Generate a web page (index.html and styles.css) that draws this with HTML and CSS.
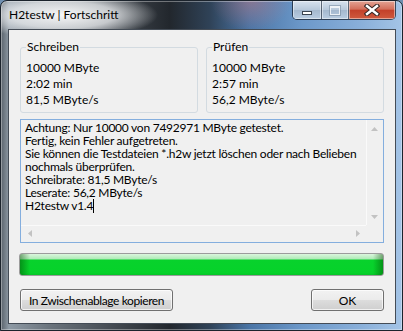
FILE: index.html
```html
<!DOCTYPE html>
<html lang="de">
<head>
    <meta charset="UTF-8">
    <meta name="viewport" content="width=device-width, initial-scale=1.0">
    <title>H2testw | Fortschritt</title>
    <link rel="stylesheet" href="styles.css">
</head>
<body>
    <div class="window">
        <div class="titlebar">
            <span class="title">H2testw | Fortschritt</span>
            <div class="caption-buttons">
                <div class="cb cb-min"><span class="min-icon"></span></div>
                <div class="cb cb-max"><span class="max-icon"></span></div>
                <div class="cb cb-close">
                    <svg width="16" height="12" viewBox="0 0 16 12">
                        <path d="M3 2 L13 10 M13 2 L3 10" stroke="#3a2a28" stroke-width="4.6" stroke-linecap="square" fill="none"/>
                        <path d="M3 2 L13 10 M13 2 L3 10" stroke="#ffffff" stroke-width="2.4" stroke-linecap="square" fill="none"/>
                    </svg>
                </div>
            </div>
        </div>
        <div class="client">
            <div class="groups">
                <fieldset class="group">
                    <legend>Schreiben</legend>
                    <div class="value">10000 MByte</div>
                    <div class="value">2:02 min</div>
                    <div class="value">81,5 MByte/s</div>
                </fieldset>
                <fieldset class="group">
                    <legend>Prüfen</legend>
                    <div class="value">10000 MByte</div>
                    <div class="value">2:57 min</div>
                    <div class="value">56,2 MByte/s</div>
                </fieldset>
            </div>
            <div class="log">
                <div class="log-text">
                    <div class="line">Achtung: Nur 10000 von 7492971 MByte getestet.</div>
                    <div class="line">Fertig, kein Fehler aufgetreten.</div>
                    <div class="line">Sie können die Testdateien *.h2w jetzt löschen oder nach Belieben</div>
                    <div class="line">nochmals überprüfen.</div>
                    <div class="line">Schreibrate: 81,5 MByte/s</div>
                    <div class="line">Leserate: 56,2 MByte/s</div>
                    <div class="line">H2testw v1.4<span class="caret"></span></div>
                </div>
                <div class="vscroll">
                    <div class="arrow-box">
                        <svg width="7" height="4" viewBox="0 0 7 4"><path d="M0 4 L3.5 0 L7 4 Z" fill="#c2c2c2"/></svg>
                    </div>
                    <div class="arrow-box">
                        <svg width="7" height="4" viewBox="0 0 7 4"><path d="M0 0 L3.5 4 L7 0 Z" fill="#c2c2c2"/></svg>
                    </div>
                </div>
                <div class="hscroll">
                    <div class="arrow-box">
                        <svg width="4" height="7" viewBox="0 0 4 7"><path d="M4 0 L0 3.5 L4 7 Z" fill="#c2c2c2"/></svg>
                    </div>
                    <div class="arrow-box">
                        <svg width="4" height="7" viewBox="0 0 4 7"><path d="M0 0 L4 3.5 L0 7 Z" fill="#c2c2c2"/></svg>
                    </div>
                </div>
                <div class="corner"></div>
            </div>
            <div class="progress"></div>
            <div class="buttons">
                <button class="button copy">In Zwischenablage kopieren</button>
                <button class="button ok">OK</button>
            </div>
        </div>
    </div>
</body>
</html>
```

FILE: styles.css
```css
body {
    margin: 0;
    font-family: Lato, "Liberation Sans", sans-serif;
    font-size: 12px;
    color: #000;
    background: #6f8fb0;
}
.window {
    width: 403px;
    height: 331px;
    box-sizing: border-box;
    border: 1px solid #1b232c;
    border-radius: 7px 7px 0 0;
    padding: 0 6px 6px 7px;
    display: flex;
    flex-direction: column;
    box-shadow: inset 0 0 0 1px rgba(255, 255, 255, 0.35);
    background:
        radial-gradient(ellipse 95px 24px at 62px 14px, rgba(255, 255, 255, 0.95), rgba(240, 242, 244, 0.75) 55%, rgba(255, 255, 255, 0) 100%),
        radial-gradient(ellipse 40px 30px at 250px 0px, rgba(190, 120, 130, 0.5), rgba(190, 120, 130, 0) 100%),
        linear-gradient(to right, #5a636c 0%, #8e9aa5 2%, #6b747d 12%, #3f454c 30%, #22272d 42%, #2f4257 52%, #4a75a6 62%, #6c98c9 75%, #8ab0da 90%, #a4c4e6 100%);
}
.titlebar {
    height: 28px;
    display: flex;
    align-items: center;
}
.title {
    padding-left: 1px;
    padding-bottom: 1px;
}
.caption-buttons {
    margin-left: auto;
    align-self: flex-start;
    display: flex;
    height: 19px;
    border: 1px solid rgba(20, 30, 45, 0.75);
    border-top: none;
    border-radius: 0 0 5px 5px;
    overflow: hidden;
    box-sizing: border-box;
}
.cb {
    display: flex;
    align-items: center;
    justify-content: center;
    box-shadow: inset 0 0 0 1px rgba(255, 255, 255, 0.45);
}
.cb-min {
    width: 28px;
    border-right: 1px solid rgba(20, 30, 45, 0.6);
    background: linear-gradient(#d7e2ee, #b7c8da 50%, #a4b8ce 51%, #b9cde2);
}
.cb-max {
    width: 26px;
    border-right: 1px solid rgba(20, 30, 45, 0.6);
    background: linear-gradient(#d7e2ee, #b7c8da 50%, #a4b8ce 51%, #b9cde2);
}
.cb-close {
    width: 46px;
    background: linear-gradient(#e4a394, #d36f5b 45%, #c3412a 52%, #cf5a3e 100%);
}
.min-icon {
    width: 8px;
    height: 2px;
    margin-top: 6px;
    background: #fff;
    border: 1px solid #3a4450;
}
.max-icon {
    width: 8px;
    height: 6px;
    border: 1px solid rgba(255, 255, 255, 0.75);
    border-top-width: 2px;
    outline: 1px solid rgba(110, 130, 150, 0.5);
}
.client {
    flex: 1;
    background: #f0f0f0;
    border: 1px solid rgba(25, 35, 48, 0.8);
    padding: 9px 11px 0 11px;
    display: flex;
    flex-direction: column;
}
.groups {
    display: flex;
    gap: 8px;
}
.group {
    flex: 1;
    margin: 0;
    min-width: 0;
    padding: 5px 5px 4px 5px;
    border: 1px solid #d3dbe1;
    border-radius: 3px;
}
.group legend {
    padding: 0 1px;
    line-height: 16px;
}
.value {
    line-height: 16px;
}
.log {
    margin-top: 6px;
    height: 124px;
    box-sizing: border-box;
    border: 1px solid #84aede;
    display: grid;
    grid-template-columns: 1fr 17px;
    grid-template-rows: 1fr 17px;
}
.log-text {
    padding: 1px 0 0 4px;
    line-height: 13px;
    letter-spacing: -0.25px;
    overflow: hidden;
}
.line {
    white-space: pre;
}
.caret {
    display: inline-block;
    width: 1px;
    height: 14px;
    background: #000;
    vertical-align: -3px;
}
.vscroll {
    display: flex;
    flex-direction: column;
    justify-content: space-between;
    box-shadow: inset 1px 0 #fafafa;
}
.hscroll {
    display: flex;
    justify-content: space-between;
    box-shadow: inset 0 1px #fafafa;
}
.arrow-box {
    width: 17px;
    height: 17px;
    display: flex;
    align-items: center;
    justify-content: center;
}
.corner {
    background: #f0f0f0;
}
.progress {
    margin: 10px 0 0 -1px;
    height: 23px;
    box-sizing: border-box;
    border: 1px solid #9c9c9c;
    border-radius: 3px;
    background:
        linear-gradient(to right, rgba(0, 70, 0, 0.45), rgba(0, 70, 0, 0) 10px, rgba(0, 70, 0, 0) calc(100% - 10px), rgba(0, 70, 0, 0.45)),
        linear-gradient(to bottom, #dcf6de 0, #aeeab6 5px, #08d22c 6px, #06d22a 90%, #05c428 100%);
}
.buttons {
    margin-top: 13px;
    display: flex;
    justify-content: space-between;
}
.button {
    height: 22px;
    padding: 0;
    font-family: Lato, "Liberation Sans", sans-serif;
    font-size: 12px;
    color: #000;
    border: 1px solid #707070;
    border-radius: 3px;
    background: linear-gradient(#f2f2f2, #ebebeb 50%, #dddddd 51%, #cfcfcf);
    box-shadow: inset 0 0 0 1px rgba(255, 255, 255, 0.7);
}
.button.copy {
    width: 153px;
    letter-spacing: -0.4px;
}
.button.ok {
    width: 73px;
}
```
